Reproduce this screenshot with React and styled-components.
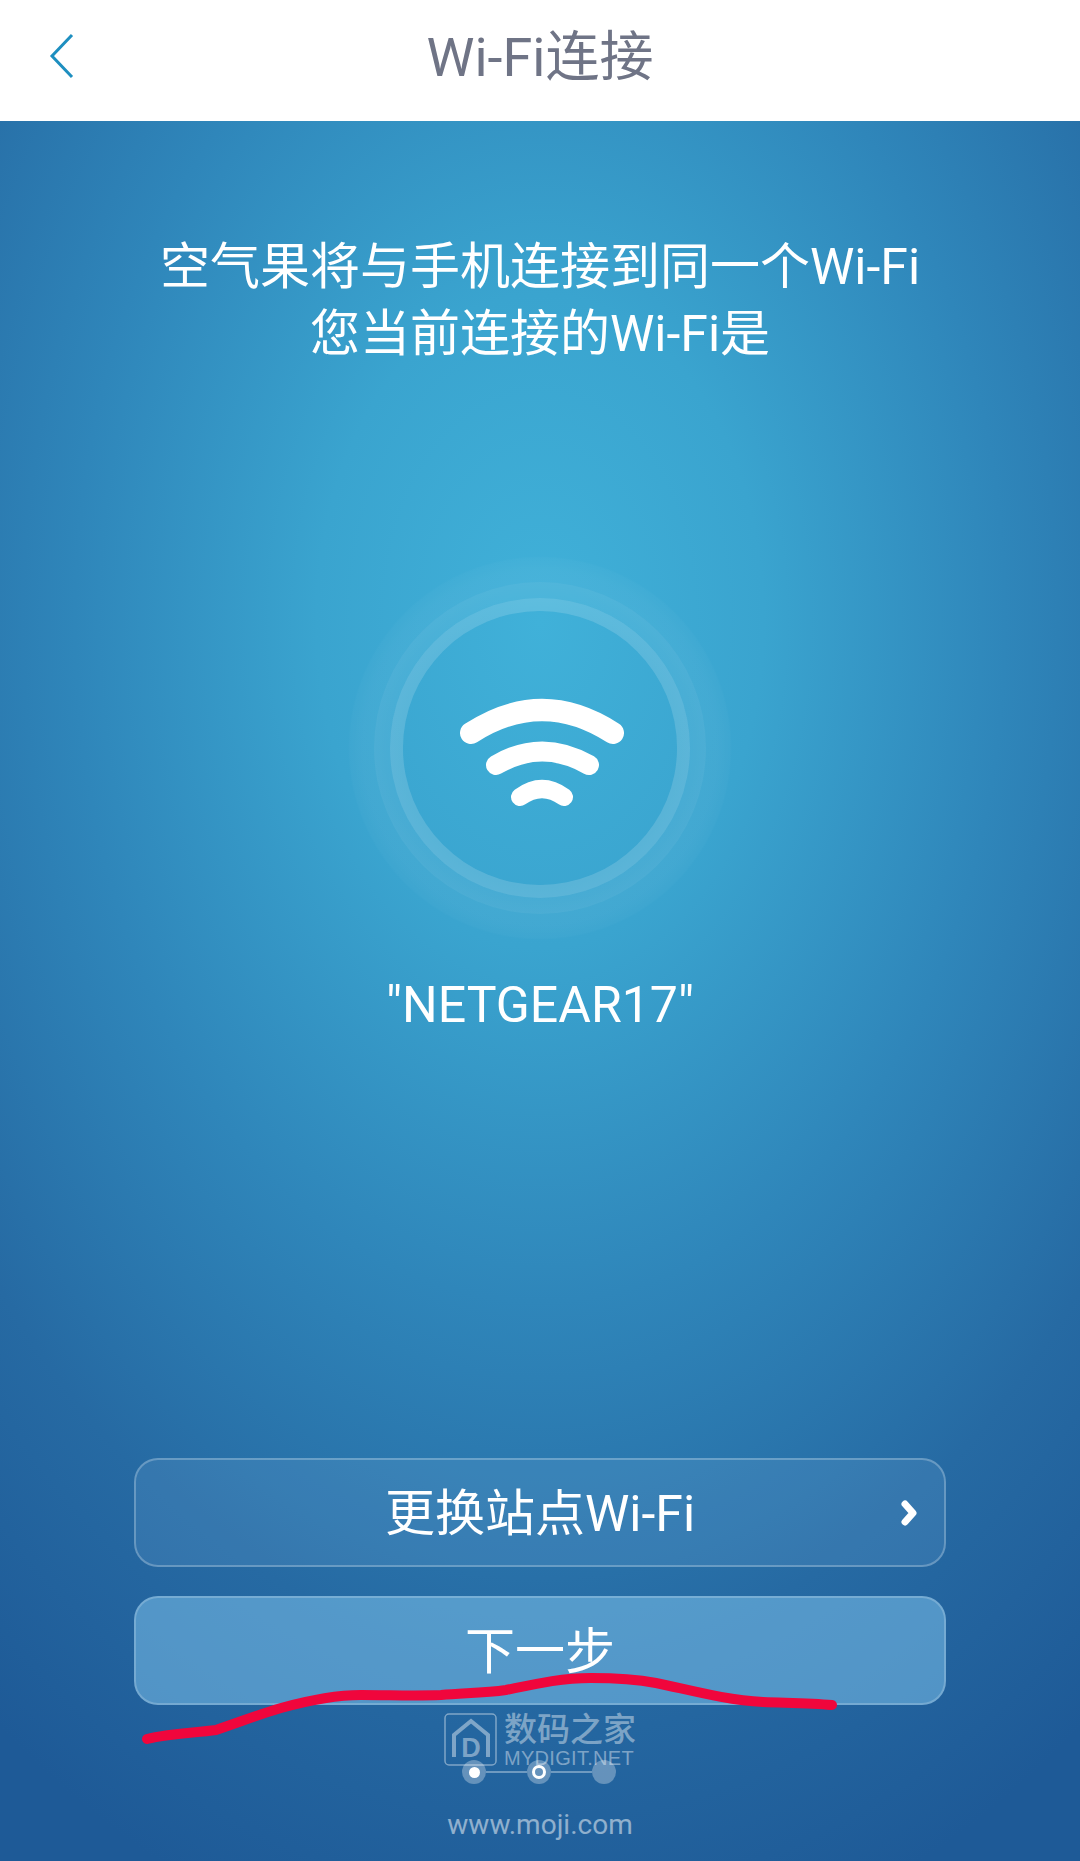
import styled, { createGlobalStyle } from 'styled-components';

const GlobalStyle = createGlobalStyle`
    html, body {
        margin: 0;
        padding: 0;
        background: #1e5a97;
    }
    * {
        box-sizing: border-box;
    }
`;

const Page = styled.div`
    position: relative;
    display: flex;
    flex-direction: column;
    width: 1080px;
    height: 1861px;
    overflow: hidden;
    font-family: Roboto, "Noto Sans CJK SC", sans-serif;
`;

const Header = styled.header`
    display: grid;
    grid-template-columns: 1fr auto 1fr;
    align-items: center;
    height: 121px;
    padding: 0 48px 6px;
    background: #fff;
`;

const BackButton = styled.button`
    display: flex;
    width: 28px;
    height: 46px;
    margin-top: -3px;
    padding: 0;
    border: none;
    background: none;
`;

const Title = styled.h1`
    margin: 0;
    font-size: 54px;
    font-weight: 400;
    line-height: 64px;
    color: #6f7486;
`;

const Main = styled.main`
    flex: 1;
    display: flex;
    flex-direction: column;
    align-items: center;
    padding: 113px 134px 21px;
    color: #fff;
    background: radial-gradient(ellipse 930px 1360px at 540px 500px, #40b1d9 0%, #3aa4cf 24%, #2f86ba 50%, #266aa3 76%, #1e5a97 100%);
`;

const Intro = styled.p`
    margin: 0;
    font-size: 50px;
    line-height: 67px;
    text-align: center;
    white-space: nowrap;
`;

const Halo = styled.div`
    display: flex;
    align-items: center;
    justify-content: center;
    width: 384px;
    height: 384px;
    margin-top: 188px;
    border-radius: 50%;
    background: radial-gradient(circle closest-side, rgba(255, 255, 255, 0) 71%, rgba(255, 255, 255, 0.045) 87%, rgba(255, 255, 255, 0.04) 93%, rgba(255, 255, 255, 0.018) 99%, rgba(255, 255, 255, 0) 100%);
`;

const Disc = styled.div`
    display: flex;
    align-items: center;
    justify-content: center;
    width: 274px;
    height: 274px;
    border-radius: 50%;
    box-shadow: 0 0 0 13px rgba(255, 255, 255, 0.11), 0 0 0 29px rgba(255, 255, 255, 0.05);
`;

const NetworkName = styled.div`
    margin-top: 34px;
    font-size: 50px;
    line-height: 62px;
`;

const Actions = styled.div`
    display: flex;
    flex-direction: column;
    gap: 29px;
    width: 812px;
    margin-top: auto;
`;

const ActionButton = styled.button`
    position: relative;
    display: flex;
    align-items: center;
    justify-content: center;
    height: 109px;
    padding: 0 0 7px;
    border: 2px solid rgba(255, 255, 255, ${(p) => (p.$primary ? 0.2 : 0.25)});
    border-radius: 24px;
    background: ${(p) => (p.$primary ? 'rgba(135, 205, 245, 0.48)' : 'rgba(150, 200, 240, 0.14)')};
    color: #fff;
    font-family: inherit;
    font-size: 50px;
`;

const Arrow = styled.svg`
    position: absolute;
    top: 39px;
    right: 24px;
    width: 20px;
    height: 28px;
`;

const Pager = styled.div`
    display: flex;
    align-items: center;
    margin: 55px 2px 0 0;
`;

const PagerDot = styled.span`
    display: flex;
    align-items: center;
    justify-content: center;
    width: 24px;
    height: 24px;
    border-radius: 50%;
    background: rgba(255, 255, 255, 0.3);
`;

const PagerLink = styled.span`
    width: 41px;
    height: 2px;
    background: rgba(255, 255, 255, 0.35);
`;

const ActiveMark = styled.span`
    width: 11px;
    height: 11px;
    border-radius: 50%;
    background: #fff;
`;

const CurrentMark = styled.span`
    width: 14px;
    height: 14px;
    border: 3px solid #fff;
    border-radius: 50%;
`;

const Footer = styled.footer`
    margin-top: 26px;
    font-size: 28px;
    line-height: 30px;
    color: rgba(255, 255, 255, 0.5);
`;

const Watermark = styled.div`
    position: absolute;
    top: 1713px;
    left: 444px;
    display: flex;
    gap: 7px;
    color: rgba(255, 255, 255, 0.42);
`;

const WatermarkLogo = styled.svg`
    width: 53px;
    height: 53px;
`;

const WatermarkText = styled.div`
    display: flex;
    flex-direction: column;
`;

const WatermarkName = styled.span`
    font-size: 33px;
    font-weight: 500;
    line-height: 34px;
`;

const WatermarkSite = styled.span`
    font-size: 20px;
    line-height: 22px;
    letter-spacing: 0.3px;
    font-family: "Liberation Sans", sans-serif;
`;

const Scribble = styled.svg`
    position: absolute;
    top: 0;
    left: 0;
    width: 1080px;
    height: 1861px;
    pointer-events: none;
`;

function WifiIcon() {
    return (
        <svg width="170" height="120" viewBox="0 0 170 120" fill="none" stroke="#fff" strokeLinecap="round">
            <path d="M16 45 Q87 -1 158 45" strokeWidth="22" />
            <path d="M41 77 Q87 50 134 77" strokeWidth="20" />
            <path d="M65 109 Q87 93 109 109" strokeWidth="18" />
        </svg>
    );
}

export default function App() {
    return (
        <>
            <GlobalStyle />
            <Page>
                <Header>
                    <BackButton aria-label="返回">
                        <svg width="28" height="46" viewBox="0 0 28 46" fill="none" stroke="#1e8fc0" strokeWidth="3">
                            <path d="M24 2 L4 23 L24 44" />
                        </svg>
                    </BackButton>
                    <Title>Wi-Fi连接</Title>
                </Header>
                <Main>
                    <Intro>
                        空气果将与手机连接到同一个Wi-Fi
                        <br />
                        您当前连接的Wi-Fi是
                    </Intro>
                    <Halo>
                        <Disc>
                            <WifiIcon />
                        </Disc>
                    </Halo>
                    <NetworkName>"NETGEAR17"</NetworkName>
                    <Actions>
                        <ActionButton>
                            更换站点Wi-Fi
                            <Arrow viewBox="0 0 20 28" fill="none" stroke="#fff" strokeWidth="7" strokeLinecap="round" strokeLinejoin="round">
                                <path d="M5 5 L13 14 L5 23" />
                            </Arrow>
                        </ActionButton>
                        <ActionButton $primary>下一步</ActionButton>
                    </Actions>
                    <Pager>
                        <PagerDot>
                            <ActiveMark />
                        </PagerDot>
                        <PagerLink />
                        <PagerDot>
                            <CurrentMark />
                        </PagerDot>
                        <PagerLink />
                        <PagerDot />
                    </Pager>
                    <Footer>www.moji.com</Footer>
                </Main>
                <Watermark>
                    <WatermarkLogo viewBox="0 0 53 53" fill="none" stroke="currentColor">
                        <rect x="1" y="1" width="51" height="51" rx="4" strokeWidth="1.5" />
                        <path d="M10 44 V22 L27 8 L44 22 V44" strokeWidth="4" />
                        <text x="27" y="44" fontSize="27" fontWeight="700" fontFamily="Liberation Sans, sans-serif" textAnchor="middle" fill="currentColor" stroke="none">D</text>
                    </WatermarkLogo>
                    <WatermarkText>
                        <WatermarkName>数码之家</WatermarkName>
                        <WatermarkSite>MYDIGIT.NET</WatermarkSite>
                    </WatermarkText>
                </Watermark>
                <Scribble viewBox="0 0 1080 1861" fill="none">
                    <path
                        d="M147 1739 C170 1733 195 1733 216 1730 C240 1722 260 1714 281 1708 C310 1700 335 1695 361 1695 C390 1695 415 1696 441 1695 C465 1693 485 1693 506 1690 C535 1684 560 1678 591 1678 C615 1678 635 1679 656 1683 C690 1690 725 1700 763 1702 C790 1703 810 1703 832 1705"
                        stroke="#f0063c"
                        strokeWidth="10"
                        strokeLinecap="round"
                    />
                </Scribble>
            </Page>
        </>
    );
}
